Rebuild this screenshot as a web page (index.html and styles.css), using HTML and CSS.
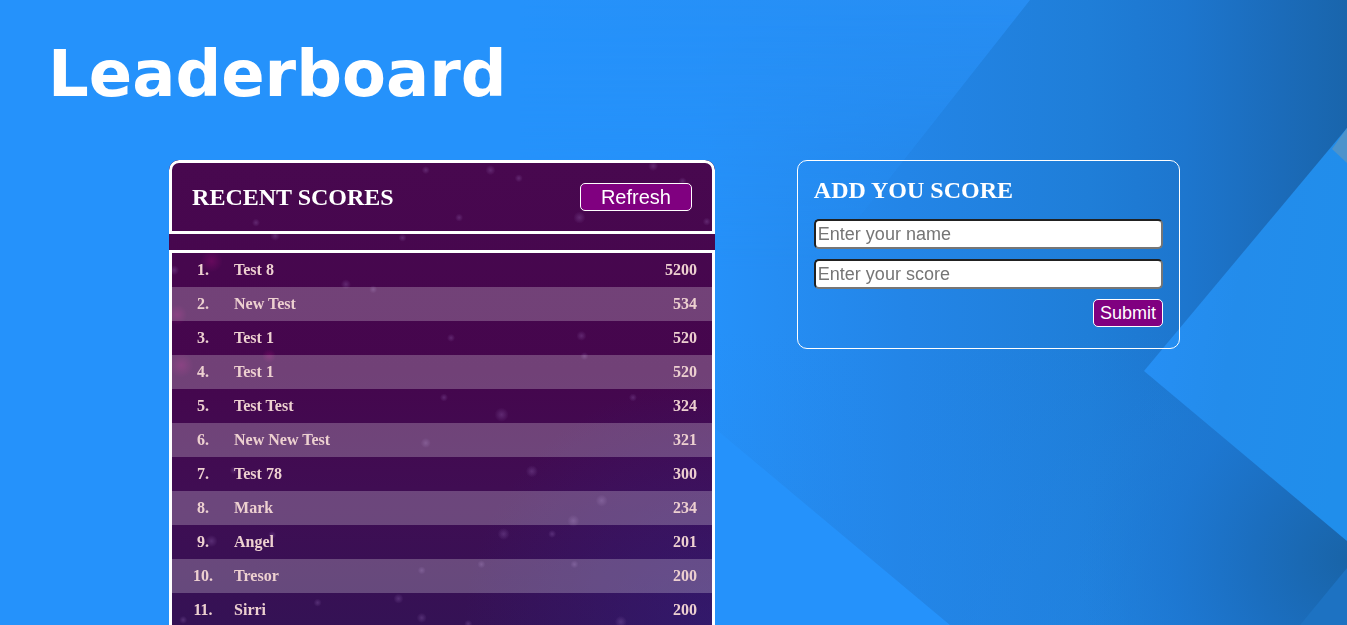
FILE: index.html
```html
<!DOCTYPE html>
<html lang="en">
<head>
<meta charset="utf-8">
<meta name="viewport" content="width=device-width, initial-scale=1">
<title>Leaderboard</title>
<link rel="stylesheet" href="styles.css">
</head>
<body>
<svg class="backdrop" viewBox="0 0 1347 625" preserveAspectRatio="none" aria-hidden="true">
  <defs>
    <linearGradient id="shade" gradientUnits="userSpaceOnUse" x1="700" y1="0" x2="1347" y2="0">
      <stop offset="0" stop-color="#2592fb"/>
      <stop offset=".12" stop-color="#258df3"/>
      <stop offset=".32" stop-color="#2385e7"/>
      <stop offset=".6" stop-color="#1f7ed8"/>
      <stop offset=".75" stop-color="#1d76ce"/>
      <stop offset=".9" stop-color="#1b6bb9"/>
      <stop offset="1" stop-color="#1965ac"/>
    </linearGradient>
    <linearGradient id="lift" gradientUnits="userSpaceOnUse" x1="0" y1="330" x2="0" y2="625">
      <stop offset="0" stop-color="#2386e8" stop-opacity="0"/>
      <stop offset="1" stop-color="#2386e8" stop-opacity=".4"/>
    </linearGradient>
    <radialGradient id="lower" gradientUnits="userSpaceOnUse" cx="1347" cy="560" r="270">
      <stop offset="0" stop-color="#1964a8"/>
      <stop offset=".35" stop-color="#1b6ebf"/>
      <stop offset=".65" stop-color="#1d77d1" stop-opacity=".85"/>
      <stop offset="1" stop-color="#1f7ed8" stop-opacity="0"/>
    </radialGradient>
    <linearGradient id="upper" gradientUnits="userSpaceOnUse" x1="520" y1="0" x2="1030" y2="0">
      <stop offset="0" stop-color="#2592fb"/>
      <stop offset="1" stop-color="#278df2"/>
    </linearGradient>
    <linearGradient id="fade" gradientUnits="userSpaceOnUse" x1="0" y1="0" x2="0" y2="270">
      <stop offset="0" stop-color="#fff"/>
      <stop offset=".3" stop-color="#fff" stop-opacity=".8"/>
      <stop offset="1" stop-color="#fff" stop-opacity="0"/>
    </linearGradient>
    <mask id="upper-mask" maskUnits="userSpaceOnUse" x="0" y="0" width="1347" height="625">
      <rect width="1347" height="625" fill="url(#fade)"/>
    </mask>
    <linearGradient id="tile" gradientUnits="userSpaceOnUse" x1="1144" y1="371" x2="1347" y2="400">
      <stop offset="0" stop-color="#268ff4"/>
      <stop offset=".4" stop-color="#238ceb"/>
      <stop offset="1" stop-color="#208eeb"/>
    </linearGradient>
  </defs>
  <rect width="1347" height="625" fill="#2592fb"/>
  <path d="M700 0H1347V625H950L700 416Z" fill="url(#shade)"/>
  <path d="M700 330H1347V625H950L700 416Z" fill="url(#lift)"/>
  <path d="M1144 371L1347 541V625H1060V371Z" fill="url(#lower)"/>
  <path d="M520 0H1030L900 165L818 270H520Z" fill="url(#upper)" mask="url(#upper-mask)"/>
  <path d="M1144 371L1347 128V541Z" fill="url(#tile)"/>
  <path d="M1332 149L1347 128V163Z" fill="#4c93cc"/>
  <path d="M1300 625L1347 568V625Z" fill="#1d72c2"/>
</svg>

<div class="page">
  <h1 class="title">Leaderboard</h1>
  <main class="content">
    <section class="board" aria-labelledby="scores-title">
      <svg class="stars" viewBox="0 0 546 465" preserveAspectRatio="xMidYMin slice" aria-hidden="true">
        <defs>
          <radialGradient id="star">
            <stop offset="0" stop-color="#a57bc8" stop-opacity=".28"/>
            <stop offset="1" stop-color="#a57bc8" stop-opacity="0"/>
          </radialGradient>
          <radialGradient id="glow">
            <stop offset="0" stop-color="#a00f78" stop-opacity=".35"/>
            <stop offset="1" stop-color="#a00f78" stop-opacity="0"/>
          </radialGradient>
        </defs>
        <g fill="url(#glow)">
          <circle cx="45" cy="100" r="11"/><circle cx="11" cy="153" r="10"/><circle cx="15" cy="203" r="12"/><circle cx="102" cy="194" r="7"/>
        </g>
        <g fill="url(#star)">
          <circle cx="178" cy="123" r="5"/><circle cx="205" cy="128" r="4"/><circle cx="8" cy="109" r="5"/><circle cx="409" cy="57" r="6"/>
          <circle cx="482" cy="6" r="5"/><circle cx="321" cy="10" r="5"/><circle cx="349" cy="18" r="4"/><circle cx="511" cy="21" r="4"/>
          <circle cx="535" cy="61" r="4"/><circle cx="290" cy="57" r="4"/><circle cx="257" cy="10" r="4"/><circle cx="108" cy="75" r="5"/>
          <circle cx="89" cy="62" r="4"/><circle cx="234" cy="77" r="4"/><circle cx="282" cy="176" r="4"/><circle cx="411" cy="174" r="5"/>
          <circle cx="414" cy="194" r="4"/><circle cx="275" cy="235" r="4"/><circle cx="332" cy="252" r="7"/><circle cx="462" cy="235" r="4"/>
          <circle cx="257" cy="280" r="5"/><circle cx="141" cy="272" r="5"/><circle cx="362" cy="308" r="6"/><circle cx="67" cy="307" r="4"/>
          <circle cx="403" cy="357" r="6"/><circle cx="431" cy="337" r="6"/><circle cx="334" cy="370" r="6"/><circle cx="382" cy="370" r="4"/>
          <circle cx="45" cy="377" r="6"/><circle cx="105" cy="371" r="4"/><circle cx="230" cy="434" r="5"/><circle cx="253" cy="453" r="5"/>
          <circle cx="253" cy="406" r="4"/><circle cx="312" cy="400" r="4"/><circle cx="299" cy="459" r="4"/><circle cx="450" cy="457" r="6"/>
          <circle cx="150" cy="438" r="4"/><circle cx="404" cy="400" r="4"/><circle cx="17" cy="455" r="4"/>
        </g>
      </svg>
      <header class="board-header">
        <h2 class="heading" id="scores-title">RECENT SCORES</h2>
        <button class="button button-refresh" type="button">Refresh</button>
      </header>
      <div class="scores-frame">
        <table class="scores" aria-labelledby="scores-title">
          <tbody>
            <tr><td class="rank">1.</td><td>Test 8</td><td class="score">5200</td></tr>
            <tr><td class="rank">2.</td><td>New Test</td><td class="score">534</td></tr>
            <tr><td class="rank">3.</td><td>Test 1</td><td class="score">520</td></tr>
            <tr><td class="rank">4.</td><td>Test 1</td><td class="score">520</td></tr>
            <tr><td class="rank">5.</td><td>Test Test</td><td class="score">324</td></tr>
            <tr><td class="rank">6.</td><td>New New Test</td><td class="score">321</td></tr>
            <tr><td class="rank">7.</td><td>Test 78</td><td class="score">300</td></tr>
            <tr><td class="rank">8.</td><td>Mark</td><td class="score">234</td></tr>
            <tr><td class="rank">9.</td><td>Angel</td><td class="score">201</td></tr>
            <tr><td class="rank">10.</td><td>Tresor</td><td class="score">200</td></tr>
            <tr><td class="rank">11.</td><td>Sirri</td><td class="score">200</td></tr>
          </tbody>
        </table>
      </div>
    </section>
    <form class="entry" aria-labelledby="entry-title">
      <h2 class="heading" id="entry-title">ADD YOU SCORE</h2>
      <div class="fields">
        <input class="field" type="text" name="name" placeholder="Enter your name" aria-label="Enter your name">
        <input class="field" type="text" inputmode="numeric" name="score" placeholder="Enter your score" aria-label="Enter your score">
        <button class="button button-submit" type="submit">Submit</button>
      </div>
    </form>
  </main>
</div>
</body>
</html>
```
FILE: styles.css
```css
* {
  box-sizing: border-box;
  margin: 0;
  padding: 0;
}

body {
  font-family: "Liberation Serif", serif;
  color: #fff;
  background: #2592fb;
}

.backdrop {
  position: fixed;
  inset: 0;
  z-index: -1;
  width: 100%;
  height: 100%;
}

.page {
  height: 100vh;
  overflow: hidden;
}

.title {
  padding: 36px 48px 48px;
  font-family: "DejaVu Sans", sans-serif;
  font-size: 64px;
  font-weight: 700;
  line-height: 76px;
}

.content {
  display: flex;
  justify-content: space-between;
  align-items: flex-start;
  padding: 0 12.4% 0 12.55%;
}

.board {
  position: relative;
  isolation: isolate;
  width: 54%;
  overflow: hidden;
  border-radius: 10px 10px 0 0;
  background:
    radial-gradient(circle at 100% 100%, rgba(48, 32, 130, 0.5), transparent 35%),
    linear-gradient(#48084f, #45064d 45%, #400d53 70%, #341255);
}

.stars {
  position: absolute;
  inset: 0;
  z-index: -1;
  width: 100%;
  height: 100%;
}

.board-header {
  display: flex;
  justify-content: space-between;
  align-items: center;
  margin-bottom: 16px;
  padding: 20px;
  border: 3px solid #fff;
  border-radius: 10px 10px 0 0;
}

.heading {
  font-size: 24px;
  line-height: 28px;
}

.button {
  height: 28px;
  border: 1px solid #fff;
  border-radius: 5px;
  background: #800080;
  color: #fff;
  font-family: "Liberation Sans", Arial, sans-serif;
}

.button-refresh {
  padding: 0 20px;
  font-size: 20px;
}

.button-submit {
  align-self: flex-end;
  padding: 0 6px;
  font-size: 18px;
}

.scores-frame {
  border: 3px solid #fff;
}

.scores {
  width: 100%;
  border-collapse: collapse;
  color: #edd0d0;
  font-size: 16px;
  font-weight: 700;
}

.scores td {
  height: 34px;
}

.scores tr:nth-child(even) {
  background: rgba(255, 255, 255, 0.24);
}

.scores .rank {
  width: 62px;
  text-align: center;
}

.scores .score {
  padding-right: 15px;
  text-align: right;
}

.entry {
  width: 37.9%;
  padding: 15px 16px 21px;
  border: 1px solid #fff;
  border-radius: 10px;
}

.fields {
  display: flex;
  flex-direction: column;
  gap: 10px;
  margin-top: 15px;
}

.field {
  width: 100%;
  height: 30px;
  padding: 1px 2px;
  border: 2px inset #767676;
  border-radius: 5px;
  background: #fff;
  color: #000;
  font-family: "Liberation Sans", Arial, sans-serif;
  font-size: 18px;
}

.field::placeholder {
  color: #757575;
}
```
